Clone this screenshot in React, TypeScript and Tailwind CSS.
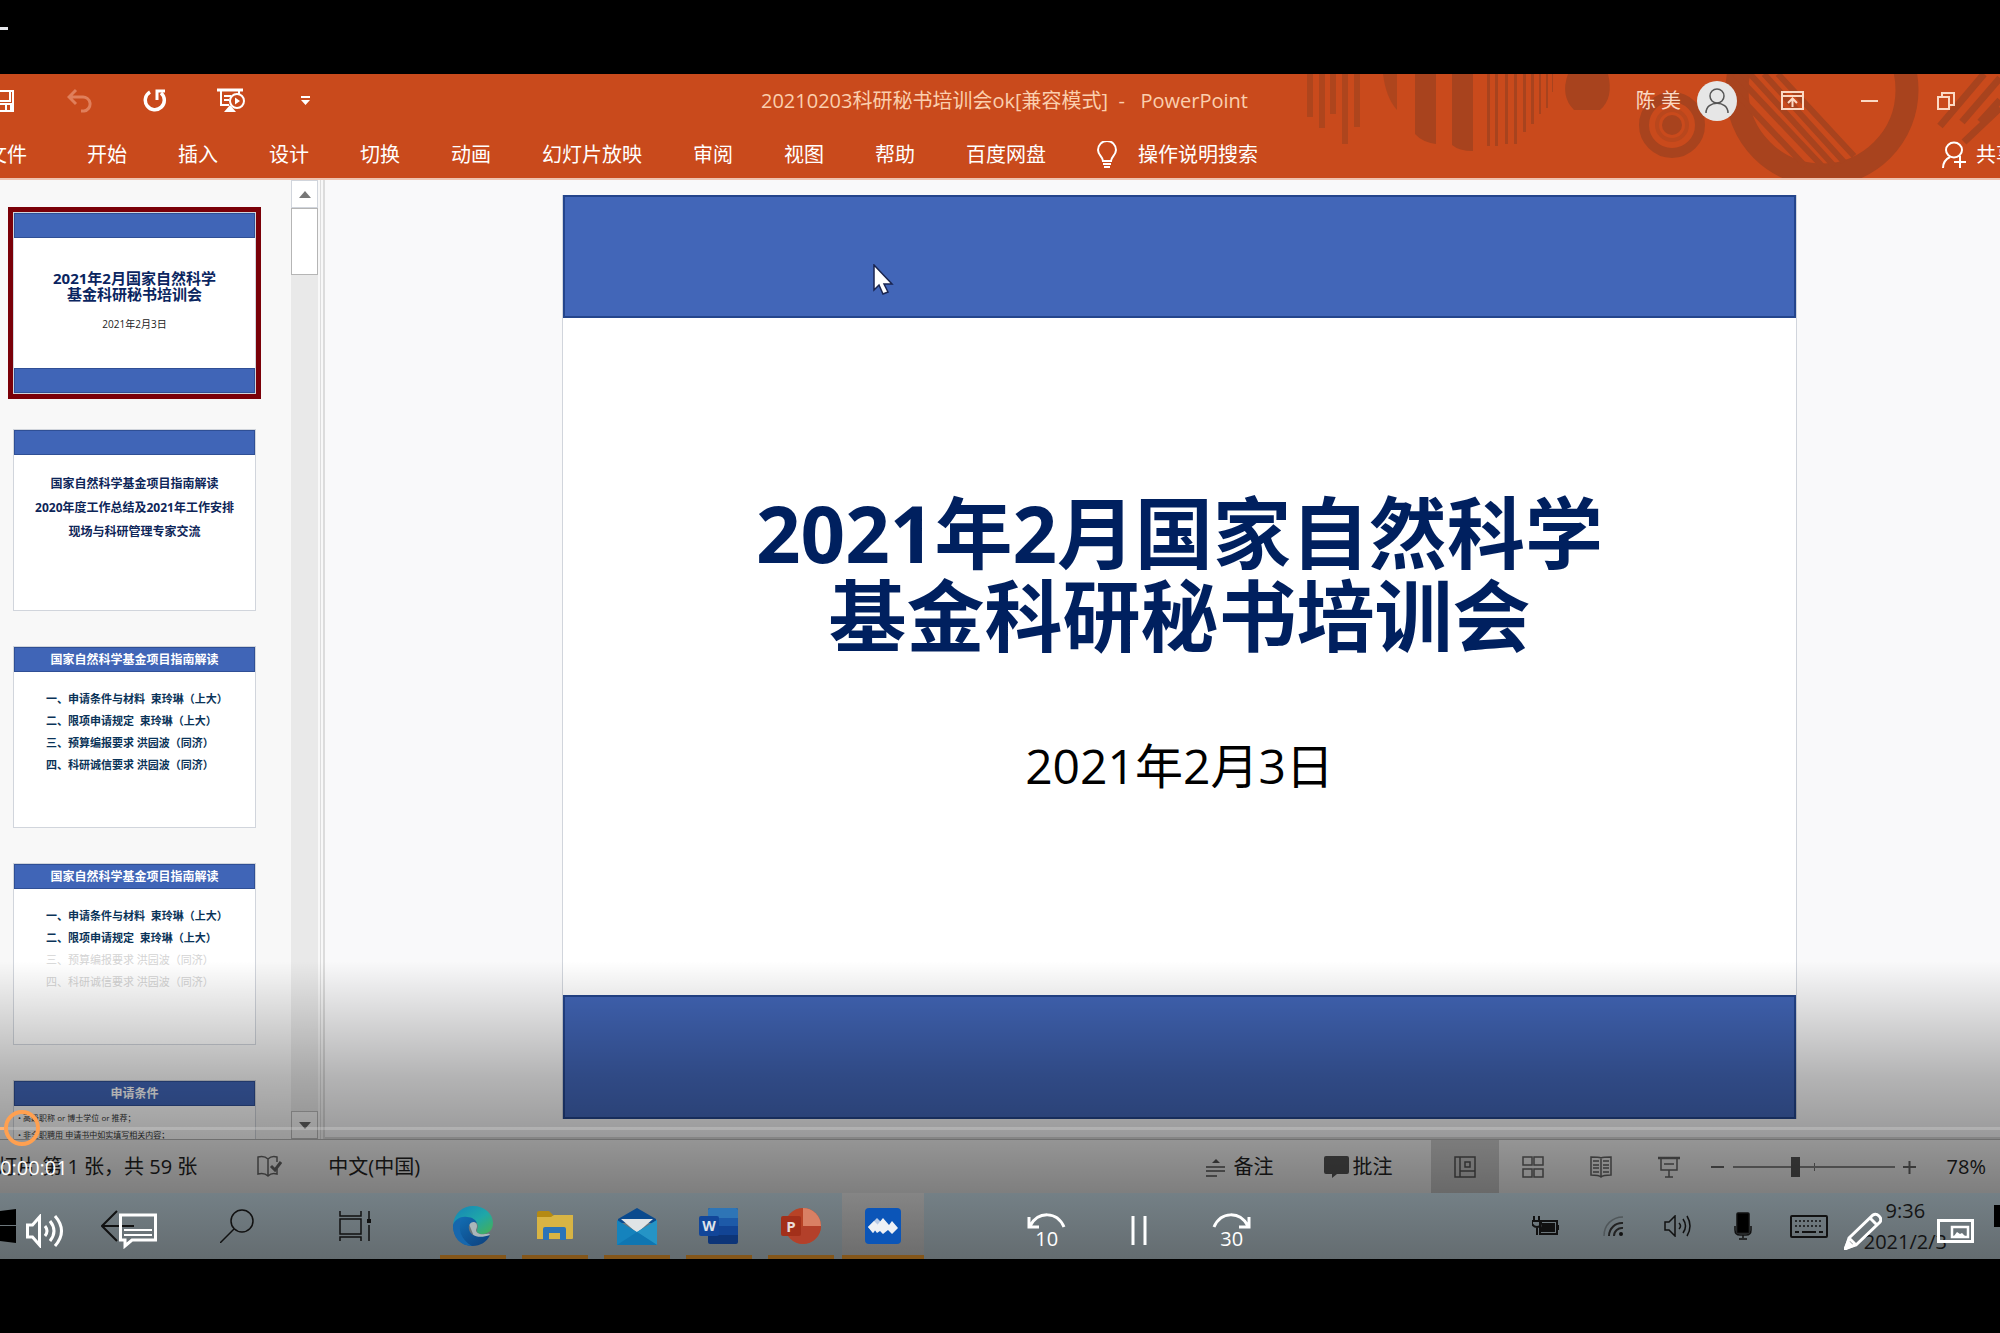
import type { ReactNode } from 'react';

const tabs = ['开始', '插入', '设计', '切换', '动画', '幻灯片放映', '审阅', '视图', '帮助', '百度网盘'];

const agenda = [
  { text: '一、申请条件与材料  束玲琳（上大）' },
  { text: '二、限项申请规定  束玲琳（上大）' },
  { text: '三、预算编报要求 洪园波（同济）' },
  { text: '四、科研诚信要求 洪园波（同济）' }
];

function Thumb({ title, active, children }: { title?: string; active?: boolean; children?: ReactNode }) {
  return (
    <button
      type="button"
      className={`block h-[192px] w-[253px] shrink-0 border-[5px] text-left ${
        active ? 'border-[#7a0008]' : 'border-transparent'
      }`}
    >
      <span className="flex h-[182px] flex-col border border-gray-300 bg-white">
        <span className="flex h-[25px] shrink-0 items-center justify-center border border-[#2f4f95] bg-[#4065b7] text-xs font-bold text-white">
          {title}
        </span>
        {children}
      </span>
    </button>
  );
}

function Agenda({ visible }: { visible: number }) {
  return (
    <span className="flex flex-col pt-4 pl-8 text-[11px] leading-[22px] font-bold whitespace-pre">
      {agenda.map((row, i) => (
        <span key={row.text} className={i < visible ? 'text-[#0a3358]' : 'font-normal text-[#d4d4d4]'}>
          {row.text}
        </span>
      ))}
    </span>
  );
}

function RibbonArt() {
  return (
    <svg className="absolute top-0 right-0 h-[105px] w-[720px]" viewBox="0 0 720 105" fill="#a8431e">
      <path d="M27 0h6v43h-6zM39 0h6v54h-6zM50 0h6v40h-6zM62 0h6v70h-6zM74 0h6v53h-6z" opacity=".8" />
      <path d="M103 0h14v36Q106 24 103 0z" opacity=".8" />
      <path d="M135 0h21v70q-14-2-21-10zM172 0h21v77q-14 0-21-6z" />
      <path d="M207 0h3v72h-3zM215 0h3v72h-3zM225 0h3v70h-3zM234 0h3v70h-3zM243 0h3v58h-3zM251 0h3v50h-3zM259 0h2v40h-2zM266 0h2v34h-2zM272 0h1v18h-1z" />
      <path d="M288 0h40q6 24-8 36h-26q-14-14-6-36z" />
      <circle cx="392" cy="51" r="28" fill="none" stroke="#a8431e" strokeWidth="10" />
      <circle cx="392" cy="51" r="15" fill="none" stroke="#b9471d" strokeWidth="4" />
      <circle cx="392" cy="51" r="10" />
      <circle cx="542" cy="16" r="85" fill="none" stroke="#a8431e" strokeWidth="23" />
      <path
        d="M455 0l88 93M470 0l84 92M484 0l80 88M498 0l76 82M455 18l70 74"
        fill="none"
        stroke="#a8431e"
        strokeWidth="6"
      />
      <path d="M660 52L704 0M682 48L720 4M700 48l20-22M684 68l36-34" stroke="#a8431e" strokeWidth="7" />
    </svg>
  );
}

function QuickAccess() {
  return (
    <div className="flex items-center text-white">
      <button type="button" aria-label="保存" className="-ml-2 w-[75px]">
        <svg width="24" height="24" viewBox="0 0 24 24" fill="none" stroke="#fff" strokeWidth="2">
          <path d="M2 2h19v20H2zM5 3v9h13V3" />
          <path d="M3 14h17v7h-2v-5h-3v5h-2v-5H8v5H3z" fill="#fff" stroke="none" />
        </svg>
      </button>
      <button type="button" aria-label="撤消" className="w-[76px]">
        <svg width="26" height="26" viewBox="0 0 26 26" fill="none" stroke="#e07f5b" strokeWidth="3">
          <path d="M9 2L2 9l7 7M3 9h12a7 7 0 0 1 2 14h-3" />
        </svg>
      </button>
      <button type="button" aria-label="恢复" className="w-[74px]">
        <svg width="24" height="26" viewBox="0 0 24 26" fill="none" stroke="#fff" strokeWidth="3.500">
          <path d="M7 4a9.500 9.500 0 1 0 11 1" />
          <path d="M14 12V3h8" strokeWidth="3" />
        </svg>
      </button>
      <button type="button" aria-label="从头开始放映" className="w-[83px]">
        <svg width="28" height="26" viewBox="0 0 28 26" fill="none" stroke="#fff" strokeWidth="2">
          <path d="M0 2h26" strokeWidth="3" />
          <path d="M4 3v14h8M22 3v3M7 8h7M7 12h5" />
          <circle cx="20" cy="13" r="7" />
          <path d="M18 9.500v7l5-3.500zM13 17l-6 7h12z" fill="#fff" stroke="none" />
        </svg>
      </button>
      <button type="button" aria-label="自定义快速访问工具栏">
        <svg width="12" height="12" viewBox="0 0 12 12" fill="#fff">
          <path d="M1 1h9v2H1zM1 5h9l-4.500 5z" />
        </svg>
      </button>
    </div>
  );
}

function Ribbon() {
  return (
    <header className="relative h-[106px] shrink-0 overflow-hidden border-b-2 border-[#eec3b0] bg-[#c94a1c] text-xl">
      <RibbonArt />
      <div className="relative flex h-[53px] items-center">
        <QuickAccess />
        <h1 className="ml-[449px] whitespace-pre text-[#fbcfae]">20210203科研秘书培训会ok[兼容模式]  -   PowerPoint</h1>
        <div className="ml-auto flex items-center pr-[45px]">
          <span className="text-[#fbd9c4]">陈 美</span>
          <svg className="ml-4" width="40" height="40" viewBox="0 0 40 40" fill="none" stroke="#555" strokeWidth="1.500">
            <circle cx="20" cy="20" r="20" fill="#e6e6e6" stroke="none" />
            <circle cx="20" cy="15" r="7" />
            <path d="M9 32c0-13 22-13 22 0" />
          </svg>
          <button type="button" aria-label="功能区显示选项" className="ml-11">
            <svg width="24" height="20" viewBox="0 0 24 20" fill="none" stroke="#fbd9c4" strokeWidth="2">
              <path d="M1 1h21v17H1zM1 5h21M11.500 16V8M7 12l4.500-4.500L16 12" />
            </svg>
          </button>
          <button type="button" aria-label="最小化" className="ml-14">
            <svg width="18" height="20" viewBox="0 0 18 20">
              <path d="M0 10h17" stroke="#fbd9c4" strokeWidth="2" />
            </svg>
          </button>
          <button type="button" aria-label="还原" className="ml-[58px]">
            <svg width="18" height="18" viewBox="0 0 18 18" fill="none" stroke="#fbd9c4" strokeWidth="2">
              <path d="M1 5h11v12H1zM5 4V1h12v12h-4" />
            </svg>
          </button>
        </div>
      </div>
      <nav className="relative flex h-14 items-center text-white">
        <button type="button" className="-ml-[13px] mr-[60px] shrink-0">文件</button>
        <div className="flex gap-[51px]">
          {tabs.map((tab) => (
            <button type="button" key={tab}>
              {tab}
            </button>
          ))}
        </div>
        <button type="button" className="ml-[50px] flex items-center gap-5">
          <svg width="22" height="28" viewBox="0 0 22 28" fill="none" stroke="#fff" strokeWidth="2">
            <path d="M7 20c0-4-5-6-5-11a9 9 0 0 1 18 0c0 5-5 7-5 11zM7 23h8M8 26h6" />
          </svg>
          操作说明搜索
        </button>
        <button type="button" className="-mr-4 ml-auto flex shrink-0 items-center gap-2">
          <svg width="26" height="28" viewBox="0 0 26 28" fill="none" stroke="#fff" strokeWidth="2">
            <ellipse cx="12" cy="9" rx="8" ry="7.500" />
            <path d="M1 27c0-6 3-9 7-11M12 21h12M18 15v12" />
          </svg>
          共享
        </button>
      </nav>
    </header>
  );
}

function ScrollBar() {
  return (
    <div className="flex w-[27px] flex-col bg-[#e9e9e9]">
      <button type="button" aria-label="向上滚动" className="flex h-7 items-center justify-center border border-gray-300 bg-white">
        <svg width="12" height="7" viewBox="0 0 12 7" fill="#777">
          <path d="M0 7l6-7 6 7z" />
        </svg>
      </button>
      <div className="h-[67px] border border-[#b5b5b5] bg-white" />
      <button
        type="button"
        aria-label="向下滚动"
        className="mt-auto flex h-7 items-center justify-center border border-[#bbb] bg-[#f8f8f8]"
      >
        <svg width="12" height="7" viewBox="0 0 12 7" fill="#666">
          <path d="M0 0h12L6 7z" />
        </svg>
      </button>
    </div>
  );
}

function ThumbPane() {
  return (
    <aside className="flex w-[325px] shrink-0 overflow-hidden border-r-2 border-[#dcdcdc] bg-[#f8f8f8]">
      <div className="flex min-w-0 flex-1 flex-col gap-[25px] overflow-hidden pt-[27px] pl-2">
        <Thumb active>
          <span className="flex flex-1 flex-col items-center pt-8 text-[#0a2560]">
            <span className="text-[15px] leading-4 font-bold">2021年2月国家自然科学</span>
            <span className="text-[15px] leading-4 font-bold">基金科研秘书培训会</span>
            <span className="mt-[14px] text-[10px] leading-4 text-[#222]">2021年2月3日</span>
          </span>
          <span className="h-[25px] border border-[#2f4f95] bg-[#4065b7]" />
        </Thumb>
        <Thumb>
          <span className="flex flex-col items-center pt-[17px] text-xs leading-6 font-bold whitespace-nowrap text-[#0d2558]">
            <span>国家自然科学基金项目指南解读</span>
            <span>2020年度工作总结及2021年工作安排</span>
            <span>现场与科研管理专家交流</span>
          </span>
        </Thumb>
        <Thumb title="国家自然科学基金项目指南解读">
          <Agenda visible={4} />
        </Thumb>
        <Thumb title="国家自然科学基金项目指南解读">
          <Agenda visible={2} />
        </Thumb>
        <Thumb title="申请条件">
          <span className="flex flex-col pt-[3px] pl-1 text-[8px] leading-[17px] whitespace-nowrap text-[#333]">
            <span>• 高级职称 or 博士学位 or 推荐；</span>
            <span>• 非全职聘用 申请书中如实填写相关内容；</span>
          </span>
        </Thumb>
      </div>
      <ScrollBar />
      <div className="ml-[2px] w-[3px] border-l border-[#dcdcdc]" />
    </aside>
  );
}

function Slide() {
  return (
    <section className="flex min-w-0 flex-1 justify-center overflow-hidden border-b-2 border-[#d8d8d8] bg-[#f9f9fa] pt-[15px] pb-[18px] pl-[34px]">
      <div className="relative flex aspect-[1.337] h-full flex-col items-center border-x border-gray-300 bg-white">
        <div className="h-[123px] w-full shrink-0 border-2 border-[#24458c] bg-[#4266b8]" />
        <h2 className="mt-[174px] text-center text-[78px] leading-[83px] font-bold whitespace-nowrap text-[#00205f]">
          2021年2月国家自然科学
          <br />
          基金科研秘书培训会
        </h2>
        <p className="mt-[72px] text-5xl leading-[72px] text-black">2021年2月3日</p>
        <div className="mt-auto h-[124px] w-full shrink-0 border-2 border-[#24458c] bg-[#4266b8]" />
        <svg className="absolute top-[69px] left-[310px]" width="22" height="31" viewBox="0 0 22 31">
          <path d="M1 1v25l5-5 4 9 5-2-4-8h8z" fill="#fff" stroke="#1a2550" strokeWidth="1.500" />
        </svg>
      </div>
    </section>
  );
}

function StatusBar() {
  return (
    <footer className="flex h-[54px] shrink-0 items-center border-t border-[#b5b5b5] bg-[#f3f3f3] text-xl whitespace-nowrap text-[#222]">
      <span className="-ml-[23px]">幻灯片 第 1 张，共 59 张</span>
      <svg className="ml-[60px]" width="25" height="24" viewBox="0 0 25 24" fill="none" stroke="#666" strokeWidth="1.500">
        <path d="M11 4C8 1 5 1 1 2v17c4-1 7-1 10 2 3-3 6-3 9-2v-5M11 4v17M11 4c3-3 6-3 9-2v5" />
        <path d="M14 11l4 4 6-8" strokeWidth="3" />
      </svg>
      <span className="ml-[46px]">中文(中国)</span>
      <div className="ml-auto flex h-full items-center pr-[14px]">
        <button type="button" className="flex items-center gap-2">
          <svg width="20" height="20" viewBox="0 0 20 20" fill="none" stroke="#555" strokeWidth="1.500">
            <path d="M0 10h19M0 14h19M0 19h11" />
            <path d="M6 6l4-4 4 4z" fill="#555" stroke="none" />
          </svg>
          备注
        </button>
        <button type="button" className="ml-[50px] flex items-center gap-1">
          <svg width="25" height="22" viewBox="0 0 25 22" fill="#555">
            <path d="M2 0h21q2 0 2 2v14q0 2-2 2H13l-5 4v-4H2q-2 0-2-2V2q0-2 2-2z" />
          </svg>
          批注
        </button>
        <div className="ml-[38px] flex h-full">
          <button type="button" aria-label="普通视图" className="flex w-[68px] items-center justify-center bg-[#cacaca]">
            <svg width="22" height="22" viewBox="0 0 22 22" fill="none" stroke="#555" strokeWidth="1.500">
              <path d="M1 1h20v20H1zM6 1v20M6 15h15M11 6h5v5h-5z" />
            </svg>
          </button>
          <button type="button" aria-label="幻灯片浏览" className="flex w-[68px] items-center justify-center">
            <svg width="22" height="22" viewBox="0 0 22 22" fill="none" stroke="#666" strokeWidth="1.500">
              <path d="M1 1h9v8H1zM12 1h9v8h-9zM1 13h9v8H1zM12 13h9v8h-9z" />
            </svg>
          </button>
          <button type="button" aria-label="阅读视图" className="flex w-[68px] items-center justify-center">
            <svg width="22" height="22" viewBox="0 0 22 22" fill="none" stroke="#666" strokeWidth="1.500">
              <path d="M11 2C9 1 6 1 1 1v18c5 0 8 0 10 2 2-2 5-2 10-2V1c-5 0-8 0-10 1zM11 3v18M3 5h6M3 9h6M3 12h6M3 16h6M13 5h6M13 9h6M13 12h6M13 16h6" />
            </svg>
          </button>
          <button type="button" aria-label="幻灯片放映" className="flex w-[68px] items-center justify-center">
            <svg width="22" height="22" viewBox="0 0 22 22" fill="none" stroke="#666" strokeWidth="1.500">
              <path d="M0 2h22" strokeWidth="2.500" />
              <path d="M3 2v12h16V2M6 8h10M11 14v7M7 21h8" />
            </svg>
          </button>
        </div>
        <button type="button" aria-label="缩小" className="ml-2">
          <svg width="14" height="14" viewBox="0 0 14 14" stroke="#666" strokeWidth="2">
            <path d="M0 7h13" />
          </svg>
        </button>
        <div className="relative ml-2 flex items-center">
          <span className="absolute left-[81px] h-2 w-px bg-[#777]" />
          <input
            type="range"
            aria-label="缩放"
            min={0}
            max={100}
            defaultValue={38}
            className="relative h-5 w-[162px] appearance-none bg-transparent [&::-webkit-slider-runnable-track]:h-[2px] [&::-webkit-slider-runnable-track]:bg-[#888] [&::-webkit-slider-thumb]:-mt-[9px] [&::-webkit-slider-thumb]:h-5 [&::-webkit-slider-thumb]:w-[9px] [&::-webkit-slider-thumb]:appearance-none [&::-webkit-slider-thumb]:bg-[#555]"
          />
        </div>
        <button type="button" aria-label="放大" className="ml-2">
          <svg width="14" height="14" viewBox="0 0 14 14" stroke="#666" strokeWidth="2">
            <path d="M0 7h13M6.500 1v13" />
          </svg>
        </button>
        <span className="ml-[30px]">78%</span>
      </div>
    </footer>
  );
}

function EdgeIcon() {
  return (
    <svg width="40" height="40" viewBox="0 0 40 40">
      <defs>
        <linearGradient id="edgeTop" x1="0" y1="0" x2="1" y2="1">
          <stop offset="0" stopColor="#1583b8" />
          <stop offset=".55" stopColor="#1fa7a8" />
          <stop offset="1" stopColor="#49b04f" />
        </linearGradient>
        <linearGradient id="edgeBase" x1="0" y1="0" x2="1" y2="1">
          <stop offset="0" stopColor="#1272b8" />
          <stop offset="1" stopColor="#0d3f7c" />
        </linearGradient>
      </defs>
      <path d="M0 19C1 7 10 0 20 0c12 0 20 8 20 17 0 7-5 11-10 11-5 0-7-2-6-4 3-6-2-11-9-11C8 12 2 14 0 19z" fill="url(#edgeTop)" />
      <path d="M16 18c3-4 8-2 8 2 0 2-1 3-1 4 0 3 4 5 9 4 3 0 4-1 5 1l-5 4H22z" fill="#a9b6ba" />
      <path d="M0 19c2-6 8-9 14-8 5 0 9 3 10 6-5-3-9 1-8 6 1 7 10 10 21 6-3 7-10 11-17 11C8 40 0 31 0 19z" fill="url(#edgeBase)" />
      <path d="M9 14c-5 8-1 20 10 26C7 40 0 31 0 20c1-4 4-6 9-6z" fill="#1667ad" />
    </svg>
  );
}

function ExplorerIcon() {
  return (
    <svg width="36" height="30" viewBox="0 0 36 30">
      <path d="M0 2q0-2 2-2h10l4 4v6H0z" fill="#b58a12" />
      <path d="M0 6h14l3-2h19v23q0 1-1 1H0z" fill="#d8b444" />
      <path d="M6 29V18q0-2 2-2h19q2 0 2 2v11h-6v-7H12v7z" fill="#2b74b8" />
    </svg>
  );
}

function MailIcon() {
  return (
    <svg width="40" height="38" viewBox="0 0 40 38">
      <path d="M1 12L20 1l19 11v4H1z" fill="#0a4a8e" />
      <path d="M4 12h32L20 26z" fill="#e0e4e6" />
      <path d="M0 13l20 12 20-12v25H0z" fill="#1583bd" />
      <path d="M20 25l20-12v25z" fill="#2594c6" />
      <path d="M0 38l20-13 20 13z" fill="#0f76b2" />
    </svg>
  );
}

function WordIcon() {
  return (
    <svg width="40" height="36" viewBox="0 0 40 36">
      <rect x="9" width="30" height="36" rx="2" fill="#0d3578" />
      <path d="M9 2q0-2 2-2h26q2 0 2 2v8H9z" fill="#2e75b6" />
      <path d="M9 10h30v8H9z" fill="#1d5aa8" />
      <path d="M9 18h30v9H9z" fill="#124494" />
      <rect y="8" width="20" height="20" rx="2" fill="#12469a" />
      <text x="10" y="23" textAnchor="middle" fontSize="14" fontWeight="bold" fill="#dfe3ea">W</text>
    </svg>
  );
}

function PowerPointIcon() {
  return (
    <svg width="40" height="36" viewBox="0 0 40 36">
      <circle cx="22" cy="18" r="18" fill="#b84326" />
      <path d="M22 0a18 18 0 0 1 18 18H22z" fill="#d98064" />
      <path d="M22 18h18a18 18 0 0 1-31 12z" fill="#b3402a" />
      <rect y="8" width="20" height="20" rx="2" fill="#a3301a" />
      <text x="10" y="24" textAnchor="middle" fontSize="15" fontWeight="bold" fill="#eadedb">P</text>
    </svg>
  );
}

function MeetingIcon() {
  return (
    <svg width="36" height="36" viewBox="0 0 36 36">
      <rect width="36" height="36" rx="4" fill="#0b55b8" />
      <path d="M3 19l9-9 5 5-9 10z" fill="#b9cbe6" />
      <path d="M3 19l6-6 4 4-5 8z" fill="#eef1f5" />
      <path d="M9 21l9-11 6 7 3-4 6 7-6 6-4-4-5 4-3-3-3 2z" fill="#eef1f5" />
    </svg>
  );
}

const apps = [
  { name: 'Edge', icon: <EdgeIcon /> },
  { name: '文件资源管理器', icon: <ExplorerIcon /> },
  { name: '邮件', icon: <MailIcon /> },
  { name: 'Word', icon: <WordIcon /> },
  { name: 'PowerPoint', icon: <PowerPointIcon /> },
  { name: '腾讯会议', icon: <MeetingIcon />, active: true }
];

function Taskbar() {
  return (
    <div className="flex h-[66px] shrink-0 items-stretch bg-linear-to-b from-[#748086] to-[#646c70]">
      <div className="flex flex-1 items-center">
        <button type="button" aria-label="开始">
          <svg width="16" height="34" viewBox="0 0 16 34">
            <path d="M0 2l16-2v16H0zM0 17h16v17L0 32z" />
          </svg>
        </button>
        <button type="button" aria-label="返回" className="ml-[85px]">
          <svg width="34" height="32" viewBox="0 0 34 32" fill="none" stroke="#111" strokeWidth="2">
            <path d="M16 1L1 16l15 15M1 16h32" />
          </svg>
        </button>
        <button type="button" aria-label="搜索" className="ml-[85px]">
          <svg width="34" height="34" viewBox="0 0 34 34" fill="none" stroke="#111" strokeWidth="1.500">
            <circle cx="22" cy="12" r="11" />
            <path d="M14 20L0 34" />
          </svg>
        </button>
        <button type="button" aria-label="任务视图" className="ml-[85px]">
          <svg width="34" height="30" viewBox="0 0 34 30" fill="none" stroke="#111" strokeWidth="1.500">
            <path d="M1 0v5h21V0M1 8h21v15H1zM1 30v-4h21v4M30 0v8M30 14v16" />
            <path d="M28 8h4v4h-4z" fill="#111" stroke="none" />
          </svg>
        </button>
        <div className="ml-[59px] flex h-full">
          {apps.map((app) => (
            <button
              type="button"
              key={app.name}
              aria-label={app.name}
              className={`flex w-[82px] flex-col items-center ${
                app.active ? 'bg-linear-to-b from-[#858585] to-[#6c6c6c]' : ''
              }`}
            >
              <span className="flex flex-1 items-center pt-1">{app.icon}</span>
              <span className={`h-1 bg-[#84561a] ${app.active ? 'w-full' : 'w-[66px]'}`} />
            </button>
          ))}
        </div>
      </div>
      <div className="flex items-center text-xl leading-[31px] text-[#141414]">
        <svg width="28" height="20" viewBox="0 0 28 20" fill="none" stroke="#111" strokeWidth="2">
          <path d="M8 5h17v13H8zM26 9v5M2 0v4M7 0v4M0 5h9v3q-1 3-4 3t-5-3zM5 11v8" />
          <path d="M10 7h13v9H8z" fill="#111" stroke="none" />
        </svg>
        <svg className="ml-[42px]" width="24" height="22" viewBox="0 0 24 22" fill="none" stroke="#222" strokeWidth="2">
          <path d="M12 21a8 8 0 0 1 9-8M7 21A13 13 0 0 1 21 8" />
          <path d="M2 21C2 10 10 2 21 2" stroke="#50575a" strokeWidth="1.500" />
          <circle cx="19" cy="19" r="2" fill="#111" stroke="none" />
        </svg>
        <svg className="ml-[38px]" width="28" height="22" viewBox="0 0 28 22" fill="none" stroke="#111" strokeWidth="1.500">
          <path d="M1 7h4l6-6v20l-6-6H1zM15 8q3 3 0 6M19 4q5 7 0 14M23 1q6 10 0 20" />
        </svg>
        <svg className="ml-[42px]" width="18" height="28" viewBox="0 0 18 28" fill="none" stroke="#111" strokeWidth="1.500">
          <rect x="3" y="1" width="12" height="20" rx="1" fill="#000" />
          <path d="M1 14v4q0 5 5 5h6q5 0 5-5v-4M9 23v3M5 27h8" />
        </svg>
        <svg className="ml-[38px]" width="38" height="23" viewBox="0 0 38 23" fill="none" stroke="#111" strokeWidth="2">
          <rect x="1" y="1" width="36" height="21" rx="1" />
          <path d="M5 6h28M5 11h28" strokeDasharray="2 2" strokeWidth="1.500" />
          <path d="M5 17h4M12 17h14M29 17h4" />
        </svg>
        <div className="ml-9 text-center">
          <div>9:36</div>
          <div>2021/2/3</div>
        </div>
        <svg className="mb-5 ml-[47px]" width="6" height="22" viewBox="0 0 6 22">
          <path d="M0 0h6v22H0z" />
        </svg>
      </div>
    </div>
  );
}

function PlayerControls() {
  return (
    <div className="absolute inset-x-0 bottom-0 text-white">
      <div className="relative flex h-9 items-center">
        <span className="absolute left-0 h-[3px] w-1 bg-[#ffa050]" />
        <input
          type="range"
          aria-label="播放进度"
          min={0}
          max={100}
          step={0.1}
          defaultValue={0.2}
          className="relative h-9 w-full appearance-none bg-transparent [&::-webkit-slider-runnable-track]:h-[3px] [&::-webkit-slider-runnable-track]:bg-white/20 [&::-webkit-slider-thumb]:-mt-[17px] [&::-webkit-slider-thumb]:h-9 [&::-webkit-slider-thumb]:w-9 [&::-webkit-slider-thumb]:appearance-none [&::-webkit-slider-thumb]:rounded-full [&::-webkit-slider-thumb]:border-4 [&::-webkit-slider-thumb]:border-[#ffa050]"
        />
      </div>
      <div className="flex h-[47px] items-center pb-1 text-xl">0:00:01</div>
      <div className="flex h-[66px] items-center px-[26px] pt-[10px]">
        <div className="flex w-[51.4%] items-center gap-[55px]">
          <button type="button" aria-label="音量">
            <svg width="38" height="34" viewBox="0 0 38 34" fill="none" stroke="#fff" strokeWidth="3">
              <path d="M1.500 11h5l7-8v28l-7-8h-5zM19 12q4 5 0 10M24 7q8 10 0 20M29 2q13 15 0 30" />
            </svg>
          </button>
          <button type="button" aria-label="字幕">
            <svg width="38" height="36" viewBox="0 0 38 36" fill="none" stroke="#fff" strokeWidth="3">
              <path d="M1.500 2h35v25H13l-7 6v-6H1.500z" />
              <path d="M5 17h28M5 22h28" strokeWidth="2" />
            </svg>
          </button>
        </div>
        <div className="flex items-center gap-[65px]">
          <button type="button" aria-label="后退 10 秒" className="flex w-[39px] flex-col items-center">
            <svg width="39" height="16" viewBox="0 0 39 16" fill="none" stroke="#fff" strokeWidth="3">
              <path d="M2 4v10h10M3 13C11-2 30-2 37 14" />
            </svg>
            <span className="text-xl leading-5">10</span>
          </button>
          <button type="button" aria-label="暂停">
            <svg width="16" height="30" viewBox="0 0 16 30" stroke="#fff" strokeWidth="3">
              <path d="M2 0v29M14 0v29" />
            </svg>
          </button>
          <button type="button" aria-label="前进 30 秒" className="flex w-[39px] flex-col items-center">
            <svg width="39" height="16" viewBox="0 0 39 16" fill="none" stroke="#fff" strokeWidth="3">
              <path d="M37 4v10H27M36 13C28-2 9-2 2 14" />
            </svg>
            <span className="text-xl leading-5">30</span>
          </button>
        </div>
        <div className="ml-auto flex items-center gap-[55px]">
          <button type="button" aria-label="编辑">
            <svg width="38" height="38" viewBox="0 0 38 38" fill="none" stroke="#fff" strokeWidth="3">
              <path d="M2 36l3-10L29 3q3-2 6 1t1 6L12 33zM5 26l7 7M26 6l7 7" />
              <path d="M1 37l3-7 4 4z" fill="#fff" />
            </svg>
          </button>
          <button type="button" aria-label="迷你视图">
            <svg width="37" height="24" viewBox="0 0 37 24" fill="none" stroke="#fff" strokeWidth="3">
              <path d="M1.500 1.500h34v21h-34z" />
              <path d="M15 8h16v10H15z" strokeWidth="2.500" />
              <path d="M17 17l3-4 3 2 2-1 3 3z" fill="#fff" stroke="none" />
            </svg>
          </button>
        </div>
      </div>
    </div>
  );
}

export default function App() {
  return (
    <div className="flex h-screen flex-col overflow-hidden bg-black font-[family-name:'Open_Sans','Noto_Sans_CJK_SC',sans-serif]">
      <div className="h-[74px] shrink-0 pt-[27px]">
        <div className="h-[3px] w-2 bg-gray-200" />
      </div>
      <div className="relative flex min-h-0 flex-1 flex-col overflow-hidden">
        <Ribbon />
        <main className="flex min-h-0 flex-1">
          <ThumbPane />
          <Slide />
        </main>
        <StatusBar />
        <Taskbar />
        <div className="pointer-events-none absolute inset-x-0 bottom-[66px] h-[232px] bg-linear-to-b from-transparent via-black/28 to-black/48" />
        <PlayerControls />
      </div>
      <div className="h-[74px] shrink-0" />
    </div>
  );
}
